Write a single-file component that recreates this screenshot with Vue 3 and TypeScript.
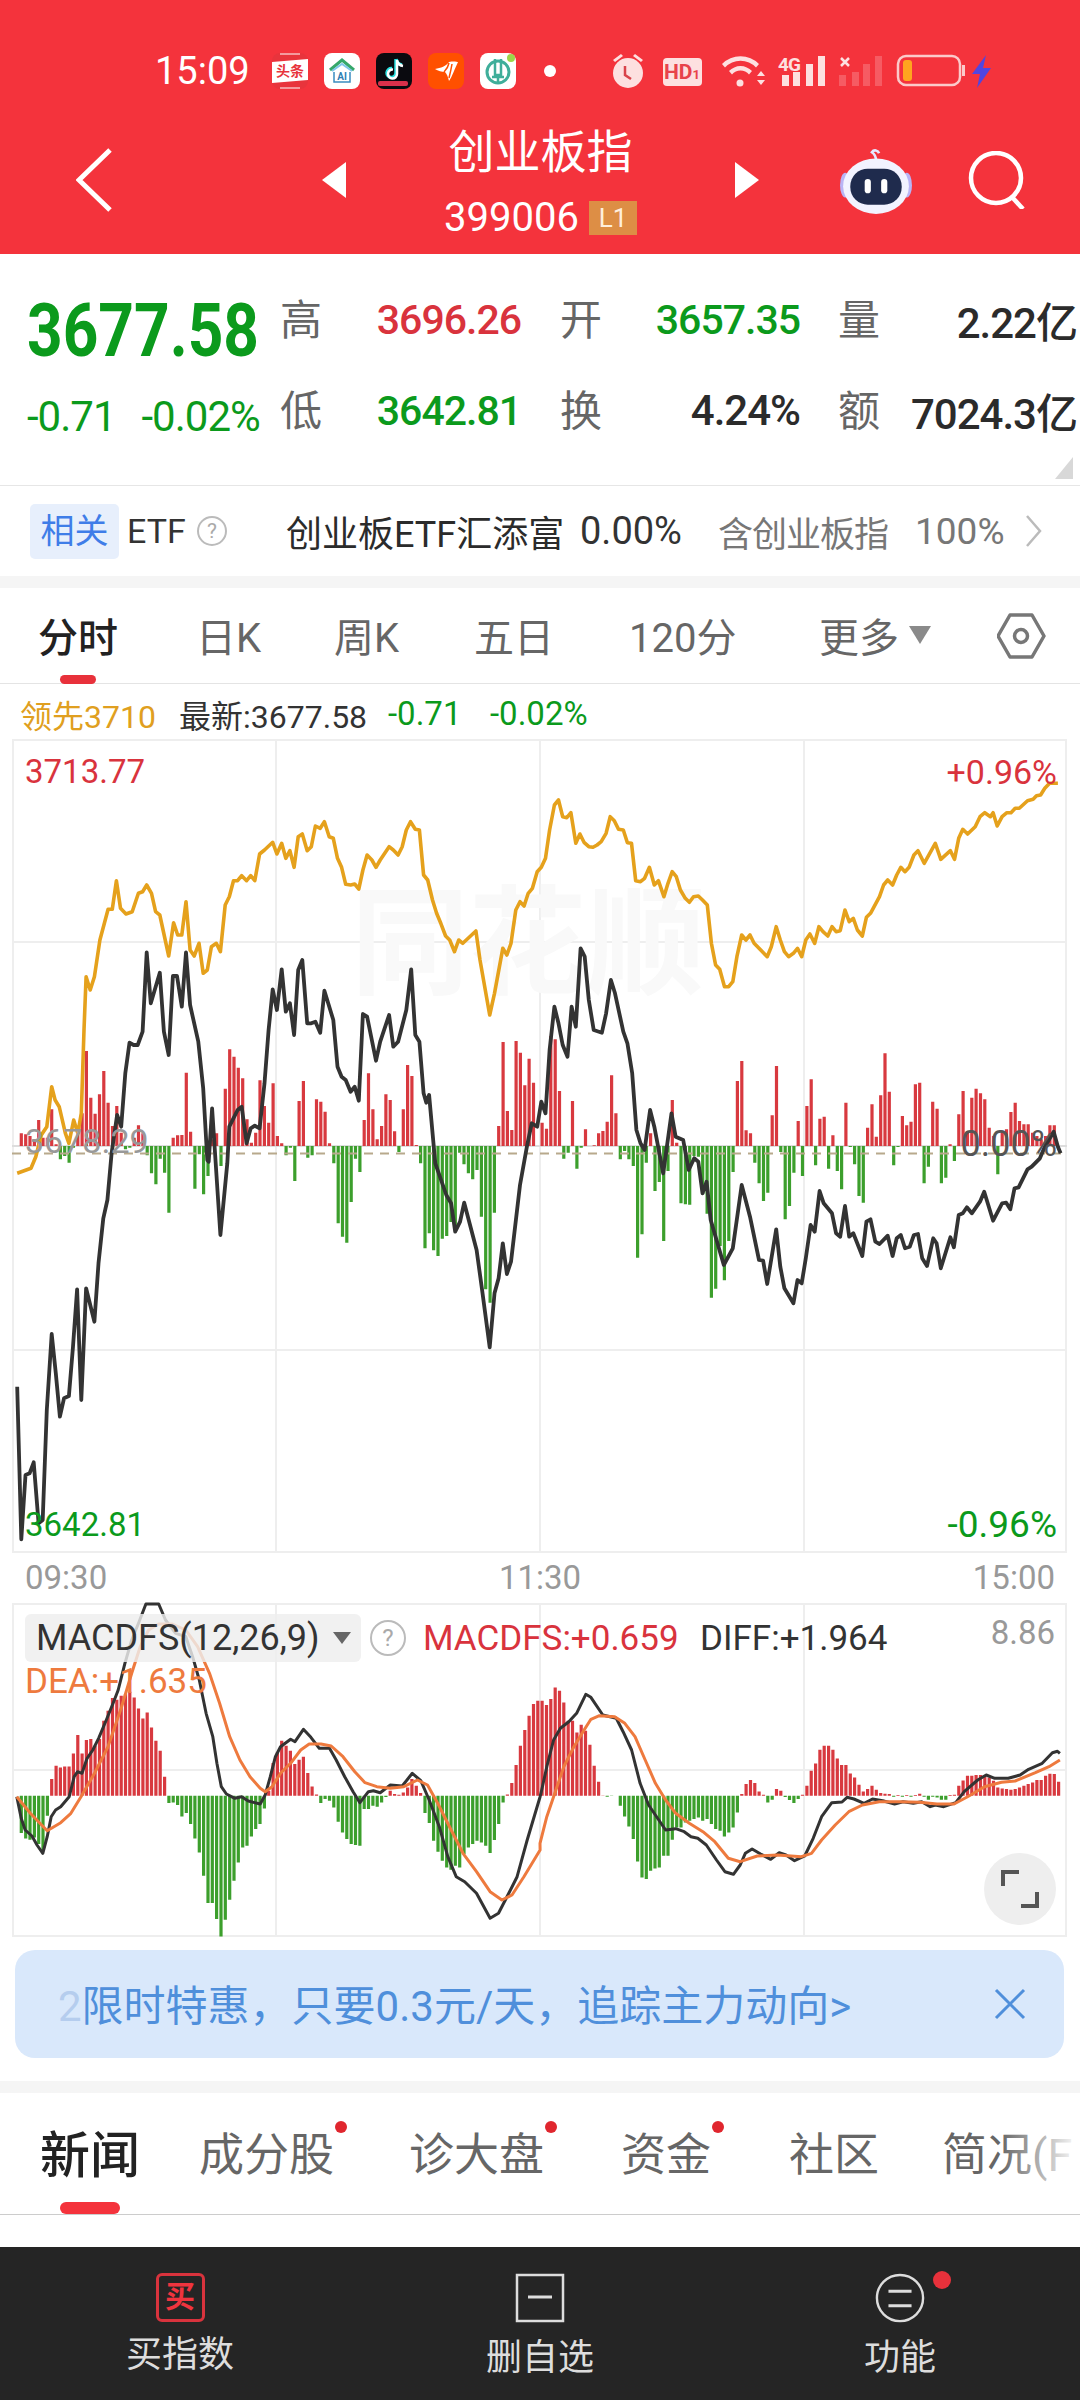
<script setup lang="ts">
// traced from the chart, values are in crop pixels, see the toPath helpers
const goldPts = "25,1330 45,1315 52,1280 60,1215 68,1190 75,1070 80,1110 86,1130 95,1210 100,1240 107,1170 113,1210 118,1150 122,900 125,740 131,780 137,740 145,630 157,538 163,538 169,452 175,535 183,552 192,545 201,490 207,485 213,465 220,490 226,545 232,555 245,678 252,578 258,615 264,615 270,515 276,660 282,678 289,640 295,730 301,720 307,650 314,640 320,665 327,525 333,500 339,452 345,452 351,437 358,452 364,437 370,452 377,372 384,360 396,337 402,372 409,340 415,385 421,362 427,412 433,320 439,312 446,362 452,350 458,288 465,295 471,275 478,320 484,325 490,385 496,412 502,463 509,465 515,462 521,477 527,420 533,375 540,390 546,412 552,390 565,350 571,360 578,375 584,350 590,300 596,275 603,298 609,300 615,435 621,450 628,510 634,550 640,580 647,618 653,630 660,665 666,630 672,640 691,603 697,690 711,855 718,790 730,655 736,675 742,640 749,540 755,515 761,528 767,490 773,475 780,425 786,412 792,385 798,300 805,225 811,210 817,260 823,263 829,248 836,340 842,312 848,337 855,350 861,352 867,345 873,335 880,310 886,260 892,272 898,298 905,300 911,338 917,340 923,452 930,455 936,445 943,412 950,465 956,452 964,500 970,460 976,425 982,440 988,480 995,505 1001,517 1007,500 1014,498 1020,510 1027,525 1033,640 1039,705 1045,718 1052,770 1058,770 1064,755 1070,680 1077,615 1083,630 1089,615 1095,640 1102,655 1114,680 1120,650 1127,590 1133,630 1139,665 1145,680 1152,670 1158,655 1164,680 1170,630 1176,612 1183,640 1189,590 1195,605 1202,618 1208,590 1214,605 1220,602 1227,540 1233,575 1239,565 1245,600 1252,618 1258,562 1264,550 1277,500 1283,465 1289,450 1296,465 1302,435 1308,412 1314,425 1320,412 1327,375 1333,362 1342,400 1358,340 1366,388 1380,362 1386,388 1392,325 1398,298 1405,312 1416,290 1423,260 1430,248 1438,260 1442,248 1448,288 1455,260 1462,248 1468,248 1474,235 1480,235 1492,212 1500,208 1505,197 1511,195 1517,175 1524,160 1536,160"
const blackPts = "25,1970 31,2428 37,2235 43,2230 49,2197 56,2380 62,2370 68,2040 75,1812 81,1930 87,2060 93,2005 100,1998 106,1850 112,1678 118,2010 125,1675 137,1775 143,1600 150,1465 156,1410 162,1270 170,1155 176,1190 182,1030 188,938 194,945 200,945 207,905 213,667 219,820 232,728 238,905 245,975 251,738 257,738 264,830 270,667 276,825 288,935 295,1075 301,1290 303,1295 308,1135 320,1515 330,1300 333,1190 345,1140 351,1130 358,1240 364,1195 370,1187 377,1195 384,1060 390,900 396,778 402,840 409,718 415,845 421,820 427,915 433,720 439,690 446,880 452,880 458,875 465,908 471,782 484,870 490,1010 496,1040 502,1050 509,1085 515,1070 521,1112 527,852 533,860 546,992 552,935 565,855 571,950 578,935 590,840 597,718 603,915 609,935 615,1090 619,1118 623,1095 632,1300 648,1395 655,1420 661,1505 668,1475 674,1418 692,1560 700,1680 711,1852 718,1690 724,1645 730,1540 736,1632 742,1595 755,1365 765,1250 772,1180 780,1190 786,1115 792,1150 798,960 805,830 811,880 817,945 824,980 830,830 836,890 843,655 849,680 855,810 862,900 874,908 880,850 887,750 893,790 905,905 911,940 918,1030 924,1200 930,1240 936,1260 944,1140 950,1190 963,1330 975,1150 981,1220 992,1230 1000,1320 1008,1285 1014,1295 1020,1390 1026,1355 1032,1470 1051,1605 1064,1555 1077,1365 1089,1460 1102,1590 1108,1592 1114,1662 1127,1498 1133,1610 1139,1675 1152,1720 1158,1650 1164,1660 1170,1585 1177,1485 1183,1505 1190,1383 1196,1420 1208,1450 1214,1510 1220,1520 1227,1428 1233,1520 1239,1510 1252,1578 1258,1475 1264,1468 1271,1535 1277,1542 1289,1517 1296,1578 1302,1525 1308,1515 1314,1555 1321,1550 1327,1515 1333,1512 1339,1585 1346,1608 1355,1525 1360,1540 1366,1615 1380,1522 1385,1552 1392,1455 1398,1450 1404,1432 1411,1450 1423,1415 1429,1385 1442,1472 1455,1420 1461,1418 1467,1438 1473,1375 1479,1372 1492,1318 1498,1310 1510,1285 1517,1250 1530,1205 1536,1250 1540,1270"

const vol = [0,38,35,30,20,78,25,25,110,5,-40,-30,-50,-5,50,98,285,145,97,155,225,130,60,120,40,-10,-5,25,62,38,-28,-82,-115,-38,-80,-200,25,32,33,220,43,-128,-25,-145,-90,20,38,-60,172,290,268,235,203,80,10,40,197,120,70,188,30,8,-28,-5,-105,135,195,-35,-28,140,133,103,8,-52,-232,-272,-290,-168,-38,-78,78,218,110,20,60,155,138,44,-18,110,243,210,3,-52,-307,-262,-313,-330,-278,-270,-228,-250,-20,-55,-82,-100,-72,-212,-430,-470,-200,60,312,105,48,315,280,182,262,190,0,70,52,330,320,165,-38,-20,135,-68,-5,50,0,2,38,45,73,212,98,-40,-15,-40,-60,-335,-265,-50,38,-135,-108,-285,-75,138,10,-172,-175,-176,-30,-32,-145,-203,-455,-428,-300,-403,-285,-78,195,255,47,38,-50,-112,-165,-140,92,240,-18,-220,-180,-80,75,-90,120,200,-58,82,88,-68,32,-75,-130,130,-3,-55,-150,-170,55,125,28,152,278,163,-58,-3,90,62,73,185,190,-112,-62,133,112,-112,-95,5,-45,95,165,40,145,172,158,140,55,30,-85,40,50,102,130,75,65,65,40,30,20,30,62,62]

const macdHist = [0,-112,-128,-132,-125,-145,-165,-60,50,90,85,88,88,127,182,127,167,170,150,170,225,255,293,288,300,305,312,295,262,232,250,205,165,135,57,-22,-20,-28,-62,-52,-85,-128,-170,-240,-322,-322,-370,-422,-372,-312,-255,-200,-155,-150,-122,-100,-85,-38,15,98,130,165,150,135,95,108,117,68,28,4,-22,-10,-15,-35,-78,-110,-130,-145,-148,-150,-40,-40,-30,-33,-20,-4,15,5,3,10,25,50,30,8,-52,-82,-135,-168,-195,-215,-222,-210,-215,-175,-155,-145,-135,-140,-150,-172,-133,-85,-20,4,38,92,150,197,240,275,285,285,272,290,325,315,280,225,225,190,213,195,153,90,42,1,-3,-1,0,-30,-62,-92,-130,-197,-245,-250,-225,-218,-215,-180,-180,-132,-95,-95,-80,-75,-70,-65,-75,-70,-85,-100,-105,-122,-110,-95,-50,5,35,47,38,13,3,-20,-12,20,15,-4,-13,-22,-10,3,30,75,97,138,150,150,138,112,92,92,67,55,33,13,20,30,18,8,6,5,-3,2,-3,2,-3,2,6,-3,-12,-3,-5,-12,-12,2,3,30,46,60,60,62,62,62,55,45,25,22,20,18,20,25,30,35,40,47,47,60,66,65,42]

const diffLeft = "20,590 33,655 45,690 65,708 80,735 97,760 110,710 122,650 135,630 150,620 175,590 190,530 200,515 213,520 228,475 245,450 262,415 285,360 305,310 320,270 340,190 360,120 380,70 402,12 440,12 460,60 490,100 520,110 540,170 560,240 580,340 600,410 612,490 625,560 640,582 665,595 685,590 705,603 740,612 755,585 770,530 785,470 800,440 830,418 843,425 868,388 890,412 915,445 945,445 965,480 990,530 1015,575 1035,608 1060,575 1075,572 1095,578 1125,555 1160,558 1190,520 1215,542 1240,600 1270,680 1295,770 1320,830 1345,845 1380,880 1420,955 1445,940 1470,890 1500,830 1530,720 1568,590"
const diffRight = "5,570 20,500 40,420 60,385 85,365 108,340 135,283 150,292 185,345 225,355 245,395 270,450 295,550 320,615 350,660 370,690 400,686 425,695 445,710 465,715 490,735 520,780 545,815 570,823 590,795 605,760 625,747 650,762 680,778 705,758 725,765 750,782 780,768 805,715 830,650 860,608 890,606 905,592 925,597 955,610 980,597 1010,602 1045,612 1070,605 1100,610 1125,605 1150,620 1165,615 1190,620 1225,608 1250,575 1290,540 1315,525 1340,535 1380,535 1415,525 1440,508 1480,490 1510,458 1525,454 1532,460"
const deaLeft = "20,590 60,640 110,692 150,668 180,640 210,590 250,520 290,440 330,320 360,220 385,140 410,90 440,72 480,72 520,90 555,140 590,220 620,310 650,410 680,480 710,530 740,565 755,575 775,560 800,520 830,490 860,450 885,432 920,432 950,438 985,470 1020,515 1050,548 1085,560 1125,565 1165,560 1205,540 1235,555 1265,610 1300,680 1340,760 1380,815 1420,875 1455,900 1485,885 1520,830 1568,750"
const deaRight = "0,730 20,650 40,590 70,500 100,440 130,390 150,358 175,347 220,350 250,370 280,410 310,480 340,550 370,600 400,640 440,670 480,695 515,725 555,775 590,785 640,768 700,765 770,770 800,760 830,720 870,675 910,635 950,615 1000,605 1060,605 1120,607 1170,612 1220,612 1260,590 1310,560 1360,547 1400,543 1460,518 1500,500 1532,480"

function toPath(pts: string, fx: (n: number) => number, fy: (n: number) => number) {
  return pts.split(" ").map((p, i) => {
    const [x, y] = p.split(",").map(Number)
    return (i ? "L" : "M") + fx(x).toFixed(1) + " " + fy(y).toFixed(1)
  }).join("")
}

const goldPath = toPath(goldPts, (x) => x / 1.452, (y) => 730 + y / 3)
const blackPath = toPath(blackPts, (x) => x / 1.452, (y) => 730 + y / 3)
const leftX = (x: number) => 10 + x / 2.958
const rightX = (x: number) => 540 + x / 2.947
const macdY = (y: number) => 1600 + y / 3
const diffPath = toPath(diffLeft, leftX, macdY) + toPath(diffRight, rightX, macdY).replace("M", "L")
const deaPath = toPath(deaLeft, leftX, macdY) + toPath(deaRight, rightX, macdY).replace("M", "L")

function bars(list: number[], base: number, up: boolean) {
  let d = ""
  list.forEach((v, i) => {
    if (v !== 0 && (v > 0) === up) {
      const x = (17 + 4.34 * i).toFixed(1)
      d += `M${x} ${base}V${(base - v / 3).toFixed(1)}`
    }
  })
  return d
}

const gridX = [276, 540, 804]
const subTabs = ["日K", "周K", "五日", "120分"]
const newsTabs = [
  { name: "成分股", dot: true, width: 210 },
  { name: "诊大盘", dot: true, width: 212 },
  { name: "资金", dot: true, width: 168 },
  { name: "社区", dot: false, width: 153 },
]
</script>

<template>
  <div class="page">
    <header class="header">
      <div class="status">
        <span class="time">15:09</span>
        <div class="apps">
          <svg class="app" viewBox="0 0 36 36">
            <rect width="36" height="36" rx="8" fill="#e8343c" />
            <path d="M8 1h20M8 35h20" stroke="#fff" stroke-width="1" />
            <path d="M0 9 36 6V27L0 30Z" fill="#fff" />
            <text x="18" y="23" text-anchor="middle" class="app-text">头条</text>
          </svg>
          <svg class="app" viewBox="0 0 36 36">
            <rect width="36" height="36" rx="8" fill="#fff" />
            <path d="M6 17 18 7l12 10" fill="none" stroke="#35a86a" stroke-width="3" />
            <path d="M8 18 18 11l10 7" fill="none" stroke="#7fc6e8" stroke-width="2" />
            <path d="M10 19v10h16V19" fill="none" stroke="#3a8cc0" stroke-width="1.5" />
            <text x="18" y="27" text-anchor="middle" class="app-ai">AI</text>
          </svg>
          <svg class="app" viewBox="0 0 36 36">
            <rect width="36" height="36" rx="8" fill="#0a0a0f" />
            <path d="M20 6v14a4.500 4.500 0 1 1-4-4.500M20 6c.5 3.500 3 5.500 6 6" fill="none" stroke="#28e0e0" stroke-width="3.500" />
            <path d="M21 7v14a4.500 4.500 0 1 1-4-4.500M21 7c.5 3.500 3 5.500 6 6" fill="none" stroke="#fff" stroke-width="2.500" />
            <rect x="2" y="28" width="30" height="5" rx="2" fill="#d9304a" />
          </svg>
          <svg class="app" viewBox="0 0 36 36">
            <rect width="36" height="36" rx="8" fill="#ff5000" />
            <path d="M7 16c6-1 11-3 14-7 5-1 8 0 9 0-3 6-6 15-9 19-1-4-2-7-4-9-3 0-7-1-10-3Z" fill="#fff" />
            <path d="M21 10c-1 5-3 7-5 9M24 11c-1 6-2 10-3 14" stroke="#ff5000" stroke-width="1.500" fill="none" />
          </svg>
          <svg class="app" viewBox="0 0 36 36">
            <rect width="36" height="36" rx="8" fill="#fff" />
            <circle cx="18" cy="19" r="11" fill="none" stroke="#3fae9a" stroke-width="3" />
            <path d="M15 6v16h6V6M12 24h12M18 22v8" fill="none" stroke="#3fae9a" stroke-width="2.500" />
            <circle cx="31" cy="5" r="4" fill="#9cd64a" />
          </svg>
        </div>
        <span class="status-dot"></span>
        <svg class="status-right" viewBox="613 50 378 42">
          <g fill="#fde0e0">
            <circle cx="628" cy="73" r="15" />
            <path d="M613 60 621 54l2 2-8 6ZM643 60l-8-6-2 2 8 6Z" />
            <rect x="663" y="58" width="39" height="28" rx="4" />
            <circle cx="740" cy="83" r="3.500" />
            <path d="M722 64a26 26 0 0 1 37 0l-3 3.500a21 21 0 0 0-31 0ZM729 71a16 16 0 0 1 23 0l-3 3.500a11 11 0 0 0-17 0Z" />
            <path d="M757 76l4-5 4 5ZM757 80l4 5 4-5Z" />
            <rect x="782" y="75" width="7" height="11" />
            <rect x="793" y="72" width="7" height="14" />
            <rect x="806" y="64" width="7" height="22" />
            <rect x="818" y="56" width="7" height="30" />
          </g>
          <path d="M625 66v9l6 4" fill="none" stroke="#d9434a" stroke-width="2.500" />
          <text x="682" y="79" text-anchor="middle" class="hd-text">HD<tspan font-size="13">1</tspan></text>
          <text x="778" y="71" class="g-text">4G</text>
          <g fill="#fff" fill-opacity=".2">
            <rect x="839" y="75" width="7" height="11" />
            <rect x="852" y="72" width="7" height="14" />
            <rect x="863" y="64" width="7" height="22" />
            <rect x="875" y="56" width="7" height="30" />
          </g>
          <path d="M841 58l8 8M849 58l-8 8" stroke="#fde0e0" stroke-width="2.500" />
          <rect x="898" y="56" width="62" height="29" rx="8" fill="none" stroke="#fbcaca" stroke-width="2.500" />
          <rect x="903" y="60" width="9" height="21" rx="3" fill="#ffa51f" />
          <rect x="962" y="65" width="3" height="11" fill="#fbcaca" />
          <path d="M986 55 972 74h8l-3 14 14-20h-8Z" fill="#5146e0" />
        </svg>
      </div>
      <div class="nav">
        <svg class="back" viewBox="0 0 36 64"><path d="M34 2 3 32l31 30" fill="none" stroke="#fff" stroke-width="5" /></svg>
        <span class="tri tri-left"></span>
        <div class="nav-center">
          <div class="nav-title">创业板指</div>
          <div class="nav-code">399006 <span class="level">L1</span></div>
        </div>
        <span class="tri tri-right"></span>
        <svg class="robot" viewBox="0 0 72 66">
          <path d="M36 14c0-4-1-6-4-8 2-3 6-2 7 1" fill="none" stroke="#e6e8ff" stroke-width="2.500" />
          <ellipse cx="6" cy="38" rx="5" ry="12" fill="#b9b4f5" />
          <ellipse cx="66" cy="38" rx="5" ry="12" fill="#b9b4f5" />
          <ellipse cx="36" cy="39" rx="32" ry="27" fill="#f2f3ff" />
          <rect x="11" y="22" width="50" height="35" rx="17" fill="#1f2b4d" />
          <rect x="25" y="32" width="6" height="14" rx="3" fill="#fff" />
          <rect x="41" y="32" width="6" height="14" rx="3" fill="#fff" />
        </svg>
        <svg class="search" viewBox="0 0 58 58">
          <circle cx="28" cy="27" r="25" fill="none" stroke="#fff" stroke-width="4.500" />
          <path d="M44 46 55 58" stroke="#fff" stroke-width="4.500" />
        </svg>
      </div>
    </header>

    <section class="quote">
      <div class="quote-main">
        <div class="price">3677.58</div>
        <div class="change"><span>-0.71</span><span>-0.02%</span></div>
      </div>
      <div class="stats">
        <span class="label">高</span><span class="value red">3696.26</span>
        <span class="label">开</span><span class="value green">3657.35</span>
        <span class="label">量</span><span class="value dark">2.22亿</span>
        <span class="label">低</span><span class="value green">3642.81</span>
        <span class="label">换</span><span class="value dark">4.24%</span>
        <span class="label">额</span><span class="value dark">7024.3亿</span>
      </div>
      <span class="corner"></span>
    </section>

    <section class="related">
      <span class="related-tag">相关</span>
      <span class="related-etf">ETF</span>
      <span class="help">?</span>
      <span class="related-name">创业板ETF汇添富</span>
      <span class="related-pct">0.00%</span>
      <span class="related-sub">含创业板指</span>
      <span class="related-share">100%</span>
      <svg class="related-arrow" viewBox="0 0 17 32"><path d="M2 1 15 16 2 31" fill="none" stroke="#bbb" stroke-width="2.500" /></svg>
    </section>

    <div class="strip"></div>

    <nav class="period">
      <span class="period-active">分时</span>
      <span v-for="t in subTabs" :key="t" class="period-item">{{ t }}</span>
      <span class="period-more">更多</span>
      <span class="more-tri"></span>
      <svg class="hex" viewBox="997 612 50 48">
        <path d="M1010 616h22l12 21-12 21h-22l-12-21Z" fill="none" stroke="#777" stroke-width="3.500" stroke-linejoin="round" />
        <circle cx="1021" cy="637" r="6.500" fill="none" stroke="#777" stroke-width="3.500" />
      </svg>
    </nav>

    <div class="legend">
      <span class="gold">领先3710</span>
      <span class="latest">最新:3677.58</span>
      <span class="green leg-a">-0.71</span>
      <span class="green leg-b">-0.02%</span>
    </div>

    <div class="chart">
      <svg class="plot" viewBox="12 739 1055 814">
        <path v-for="x in gridX" :key="x" :d="`M${x} 740V1553`" stroke="#eee" stroke-width="2" />
        <path d="M12 942H1067M12 1350H1067" stroke="#eee" stroke-width="2" />
        <text x="528" y="985" text-anchor="middle" class="watermark">同花顺</text>
        <path d="M12 1146H1067" stroke="#ddd" stroke-width="2" />
        <path :d="bars(vol, 1146, true)" stroke="#d8393f" stroke-width="3.200" />
        <path :d="bars(vol, 1146, false)" stroke="#3c9f2c" stroke-width="3.200" />
        <path d="M12 1153.500H1067" stroke="#b8a98c" stroke-width="2" stroke-dasharray="9 7" />
        <path :d="goldPath" fill="none" stroke="#e5a11c" stroke-width="3.600" stroke-linejoin="round" />
        <path :d="blackPath" fill="none" stroke="#333" stroke-width="3.800" stroke-linejoin="round" />
      </svg>
      <span class="tag top-left red">3713.77</span>
      <span class="tag top-right red">+0.96%</span>
      <span class="tag mid-left">3678.29</span>
      <span class="tag mid-right">0.00%</span>
      <span class="tag bottom-left green">3642.81</span>
      <span class="tag bottom-right green">-0.96%</span>
    </div>

    <div class="times"><span>09:30</span><span>11:30</span><span>15:00</span></div>

    <div class="macd">
      <svg class="plot" viewBox="12 1603 1055 334">
        <path v-for="x in gridX" :key="x" :d="`M${x} 1604V1937`" stroke="#eee" stroke-width="2" />
        <path d="M12 1770H1067" stroke="#eee" stroke-width="2" />
        <path :d="bars(macdHist, 1795.700, true)" stroke="#d8393f" stroke-width="3.200" />
        <path :d="bars(macdHist, 1795.700, false)" stroke="#3c9f2c" stroke-width="3.200" />
        <path :d="diffPath" fill="none" stroke="#333" stroke-width="3" stroke-linejoin="round" />
        <path :d="deaPath" fill="none" stroke="#ee7a3e" stroke-width="3" stroke-linejoin="round" />
      </svg>
      <div class="macd-head">
        <div class="macd-chip">MACDFS(12,26,9)<span class="chip-tri"></span></div>
        <span class="help macd-help">?</span>
        <span class="macd-val red">MACDFS:+0.659</span>
        <span class="macd-diff">DIFF:+1.964</span>
      </div>
      <span class="macd-dea">DEA:+1.635</span>
      <span class="macd-max">8.86</span>
      <button class="expand">
        <svg viewBox="0 0 38 38" width="38" height="38">
          <path d="M2 16V2H18M36 22V36H20" fill="none" stroke="#555" stroke-width="4" />
        </svg>
      </button>
    </div>

    <div class="banner">
      <span class="banner-text"><i class="banner-fade">2</i>限时特惠，只要0.3元/天，追踪主力动向&gt;</span>
      <svg class="banner-close" viewBox="0 0 32 32"><path d="M2 2 30 30M30 2 2 30" stroke="#4f8fdb" stroke-width="3" /></svg>
    </div>

    <div class="strip strip-low"></div>

    <nav class="news">
      <span class="news-active">新闻</span>
      <span v-for="t in newsTabs" :key="t.name" class="news-item" :style="{ width: t.width + 'px' }">
        {{ t.name }}<i v-if="t.dot" class="news-dot"></i>
      </span>
      <span class="news-item news-last">简况(F</span>
      <span class="news-fade"></span>
    </nav>
    <div class="news-space"></div>

    <footer class="bottom">
      <div class="bottom-item">
        <span class="buy-icon">买</span>
        <span class="bottom-label buy-label">买指数</span>
      </div>
      <div class="bottom-item">
        <svg class="bottom-icon" viewBox="0 0 50 50">
          <rect x="2" y="2" width="46" height="46" fill="none" stroke="#ddd" stroke-width="2.500" />
          <path d="M13 24H37" stroke="#ddd" stroke-width="3" />
        </svg>
        <span class="bottom-label">删自选</span>
      </div>
      <div class="bottom-item">
        <svg class="bottom-icon" viewBox="0 0 52 50">
          <circle cx="26" cy="25" r="24" fill="none" stroke="#ddd" stroke-width="2.500" />
          <path d="M14 18H38M14 33H38" stroke="#ddd" stroke-width="3" />
        </svg>
        <span class="bottom-label">功能</span>
        <i class="bottom-dot"></i>
      </div>
    </footer>
  </div>
</template>

<style>
html, body { background: #fff; }
</style>

<style scoped>
.page {
  width: 1080px;
  height: 2400px;
  overflow: hidden;
  background: #fff;
  font-family: Roboto, "Noto Sans CJK SC", sans-serif;
  color: #333;
}
.red { color: #d9333d; }
.green { color: #0b9a1c; }
.dark { color: #2b2b2b; }

.header {
  height: 254px;
  background: #f4333c;
  color: #fff;
}
.status {
  display: flex;
  align-items: center;
  height: 42px;
  padding: 50px 0 0 155px;
}
.time { width: 93px; font-size: 38px; line-height: 42px; }
.apps { display: flex; gap: 16px; margin-left: 24px; }
.app { width: 36px; height: 36px; display: block; }
.app-text { font-size: 14px; font-weight: 700; fill: #e8343c; }
.app-ai { font-size: 10px; font-weight: 700; fill: #2f7fb5; }
.status-dot { width: 12px; height: 12px; margin-left: 28px; border-radius: 50%; background: #fff; }
.status-right { width: 378px; height: 42px; margin-left: 57px; }
.hd-text { font-size: 21px; font-weight: 700; fill: #e8434b; }
.g-text { font-size: 19px; font-weight: 700; letter-spacing: -1px; fill: #fde0e0; }

.nav {
  display: flex;
  align-items: center;
  height: 148px;
  padding: 14px 0 0 76px;
}
.back { width: 36px; height: 64px; }
.tri { width: 0; height: 0; border-top: 18px solid transparent; border-bottom: 18px solid transparent; }
.tri-left { margin-left: 210px; border-right: 24px solid #fff; }
.tri-right { border-left: 24px solid #fff; }
.nav-center {
  display: flex;
  flex-direction: column;
  align-items: center;
  align-self: flex-start;
  width: 389px;
  height: 130px;
  padding-top: 16px;
}
.nav-title { font-size: 46px; line-height: 60px; }
.nav-code {
  display: flex;
  align-items: center;
  gap: 10px;
  margin-top: 18px;
  font-size: 40px;
  line-height: 36px;
}
.level {
  width: 48px;
  height: 34px;
  background: #dd8e45;
  font-size: 26px;
  line-height: 34px;
  text-align: center;
  color: #ffeedd;
}
.robot { width: 74px; height: 68px; margin-left: 80px; }
.search { width: 58px; height: 58px; margin-left: 55px; }

.quote {
  position: relative;
  display: flex;
  height: 231px;
  padding: 20px 0 0 27px;
  box-sizing: border-box;
}
.quote-main { width: 253px; }
.price {
  margin-top: 11px;
  font-size: 74px;
  font-weight: 700;
  line-height: 92px;
  white-space: nowrap;
  transform: scaleX(.84);
  transform-origin: left center;
  color: #0b9a1c;
}
.change {
  display: flex;
  gap: 26px;
  margin-top: -6px;
  font-size: 42px;
  line-height: 92px;
  letter-spacing: -1px;
  white-space: nowrap;
  color: #0b9a1c;
}
.stats {
  display: grid;
  grid-template-columns: 42px 199px 81px 198px 80px 197px;
  grid-auto-rows: 91px;
  align-items: center;
}
.stats .label { margin-top: -6px; font-size: 42px; color: #666; }
.stats .label:nth-child(6n+3), .stats .label:nth-child(6n+5) { justify-self: end; }
.stats .value {
  justify-self: end;
  font-size: 41px;
  font-weight: 500;
  letter-spacing: -1px;
  white-space: nowrap;
}
.stats .dark { font-size: 42px; }
.corner {
  position: absolute;
  right: 7px;
  bottom: 6px;
  width: 0;
  height: 0;
  border-left: 18px solid transparent;
  border-bottom: 22px solid #d8d8d8;
}

.related {
  display: flex;
  align-items: center;
  height: 90px;
  border-top: 1px solid #e6e6e6;
  font-size: 34px;
  padding-left: 30px;
}
.related-tag {
  width: 89px;
  height: 55px;
  background: #e7effc;
  border-radius: 5px;
  color: #3f7de8;
  line-height: 55px;
  text-align: center;
}
.related-etf { margin-left: 8px; width: 62px; color: #333; }
.help {
  display: inline-block;
  width: 30px;
  height: 30px;
  margin-left: 8px;
  border: 2px solid #bbb;
  border-radius: 50%;
  box-sizing: border-box;
  font-size: 21px;
  line-height: 26px;
  text-align: center;
  color: #aaa;
}
.related-name { margin-left: 59px; color: #2b2b2b; width: 272px; font-size: 36px; white-space: nowrap; }
.related-pct { margin-left: 22px; width: 116px; font-size: 38px; color: #333; }
.related-sub { width: 197px; margin-left: 22px; font-size: 35px; letter-spacing: -1px; color: #777; white-space: nowrap; }
.related-share { width: 110px; font-size: 37px; color: #777; }
.related-arrow { width: 17px; height: 32px; }

.strip { height: 12px; background: #f5f5f5; }

.period {
  display: flex;
  align-items: center;
  position: relative;
  height: 96px;
  border-bottom: 1px solid #e4e4e4;
  box-sizing: border-box;
  padding: 0 0 2px 38px;
  font-size: 40px;
  color: #666;
}
.period-active { width: 158px; font-size: 40px; color: #222; font-weight: 500; }
.period-active::after {
  content: "";
  position: absolute;
  left: 60px;
  bottom: -1px;
  width: 36px;
  height: 9px;
  border-radius: 5px;
  background: #e8313b;
}
.period-item { width: 138px; }
.period-item:nth-of-type(3) { width: 140px; }
.period-item:nth-of-type(4) { width: 155px; }
.period-item:nth-of-type(5) { width: 190px; }
.period-more { width: 90px; }
.more-tri {
  width: 0;
  height: 0;
  border-left: 11px solid transparent;
  border-right: 11px solid transparent;
  border-top: 18px solid #8a8a8a;
}
.hex { width: 50px; height: 48px; margin-left: 66px; }

.legend {
  display: flex;
  align-items: center;
  height: 51px;
  padding: 4px 0 0 20px;
  font-size: 32px;
}
.gold { width: 159px; color: #e09f20; }
.latest { width: 209px; color: #333; }
.leg-a { width: 102px; font-size: 33px; }
.leg-b { font-size: 33px; }

.chart {
  position: relative;
  width: 1055px;
  height: 814px;
  margin-left: 12px;
  border: 2px solid #eee;
  box-sizing: border-box;
}
.plot { position: absolute; left: -2px; top: -2px; width: 1055px; overflow: visible; }
.chart .plot { height: 814px; }
.watermark { font-size: 118px; font-weight: 700; fill: #f9f9f9; }
.tag { position: absolute; font-size: 33px; line-height: 38px; }
.top-left { left: 11px; top: 12px; }
.top-right { right: 8px; top: 12px; font-size: 34px; }
.mid-left { left: 11px; top: 381px; font-size: 34px; color: #999; }
.mid-right { right: 8px; top: 384px; font-size: 36px; color: #555; }
.bottom-left { left: 11px; bottom: 7px; }
.bottom-right { right: 8px; bottom: 7px; font-size: 37px; }

.times {
  display: flex;
  justify-content: space-between;
  height: 50px;
  padding: 0 25px;
  font-size: 33px;
  line-height: 50px;
  color: #999;
}

.macd {
  position: relative;
  width: 1055px;
  height: 334px;
  margin-left: 12px;
  border: 2px solid #eee;
  box-sizing: border-box;
}
.macd .plot { height: 334px; }
.macd-head {
  position: absolute;
  left: 11px;
  top: 9px;
  display: flex;
  align-items: center;
  font-size: 35px;
  white-space: nowrap;
}
.macd-chip {
  display: flex;
  align-items: center;
  width: 336px;
  height: 48px;
  padding-left: 11px;
  box-sizing: border-box;
  background: rgba(238, 238, 238, .82);
  border-radius: 6px;
  font-size: 36px;
  color: #333;
}
.chip-tri {
  width: 0;
  height: 0;
  margin-left: 13px;
  border-left: 9px solid transparent;
  border-right: 9px solid transparent;
  border-top: 12px solid #666;
}
.macd-help { width: 36px; height: 36px; margin-left: 9px; font-size: 24px; line-height: 32px; }
.macd-val { margin-left: 17px; width: 277px; }
.macd-diff { color: #333; }
.macd-dea { position: absolute; left: 11px; top: 56px; font-size: 35px; color: #ee7a3e; }
.macd-max { position: absolute; right: 10px; top: 8px; font-size: 33px; color: #999; }
.expand {
  position: absolute;
  right: 9px;
  bottom: 10px;
  width: 72px;
  height: 72px;
  padding: 0;
  display: flex;
  align-items: center;
  justify-content: center;
  border: none;
  border-radius: 50%;
  background: #eee;
}

.banner {
  display: flex;
  align-items: center;
  justify-content: space-between;
  height: 108px;
  margin: 13px 16px 0 15px;
  padding: 0 38px 0 43px;
  border-radius: 20px;
  background: #d9e8fb;
  box-sizing: border-box;
}
.banner-text { margin-top: -3px; font-size: 42px; color: #4f8fdb; white-space: nowrap; }
.banner-fade { font-style: normal; color: #b5cdee; }
.banner-close { width: 32px; height: 32px; }
.strip-low { height: 12px; margin-top: 23px; }

.news {
  position: relative;
  display: flex;
  align-items: center;
  height: 121px;
  border-bottom: 1px solid #ccc;
  box-sizing: content-box;
  padding-left: 40px;
  font-size: 45px;
  color: #666;
  white-space: nowrap;
}
.news-active { width: 159px; margin-top: -5px; font-size: 50px; font-weight: 500; color: #222; }
.news-active::after {
  content: "";
  position: absolute;
  left: 60px;
  bottom: 0;
  width: 60px;
  height: 12px;
  border-radius: 6px;
  background: #f4333c;
}
.news-item { position: relative; display: inline-block; margin-top: -5px; }
.news-dot {
  position: absolute;
  top: 2px;
  width: 12px;
  height: 12px;
  border-radius: 50%;
  background: #e0262e;
}
.news-item:nth-of-type(2) .news-dot { left: 136px; }
.news-item:nth-of-type(3) .news-dot { left: 136px; }
.news-item:nth-of-type(4) .news-dot { left: 91px; }
.news-fade {
  position: absolute;
  right: 0;
  top: 0;
  width: 80px;
  height: 100%;
  background: linear-gradient(to right, rgba(255, 255, 255, 0), #fff);
}
.news-space { height: 32px; }

.bottom {
  display: grid;
  grid-template-columns: repeat(3, 360px);
  height: 153px;
  background: #252525;
}
.bottom-item {
  position: relative;
  display: flex;
  flex-direction: column;
  align-items: center;
  padding-top: 26px;
  color: #ddd;
}
.bottom-icon { width: 50px; height: 50px; }
.buy-icon {
  width: 49px;
  height: 49px;
  box-sizing: border-box;
  border: 3px solid #d9333d;
  border-radius: 6px;
  color: #f0343e;
  font-size: 30px;
  font-weight: 700;
  line-height: 42px;
  text-align: center;
}
.bottom-label { margin-top: 12px; font-size: 36px; line-height: 46px; }
.buy-label { margin-top: 10px; }
.bottom-dot {
  position: absolute;
  left: 213px;
  top: 24px;
  width: 18px;
  height: 18px;
  border-radius: 50%;
  background: #e8313b;
}
</style>
